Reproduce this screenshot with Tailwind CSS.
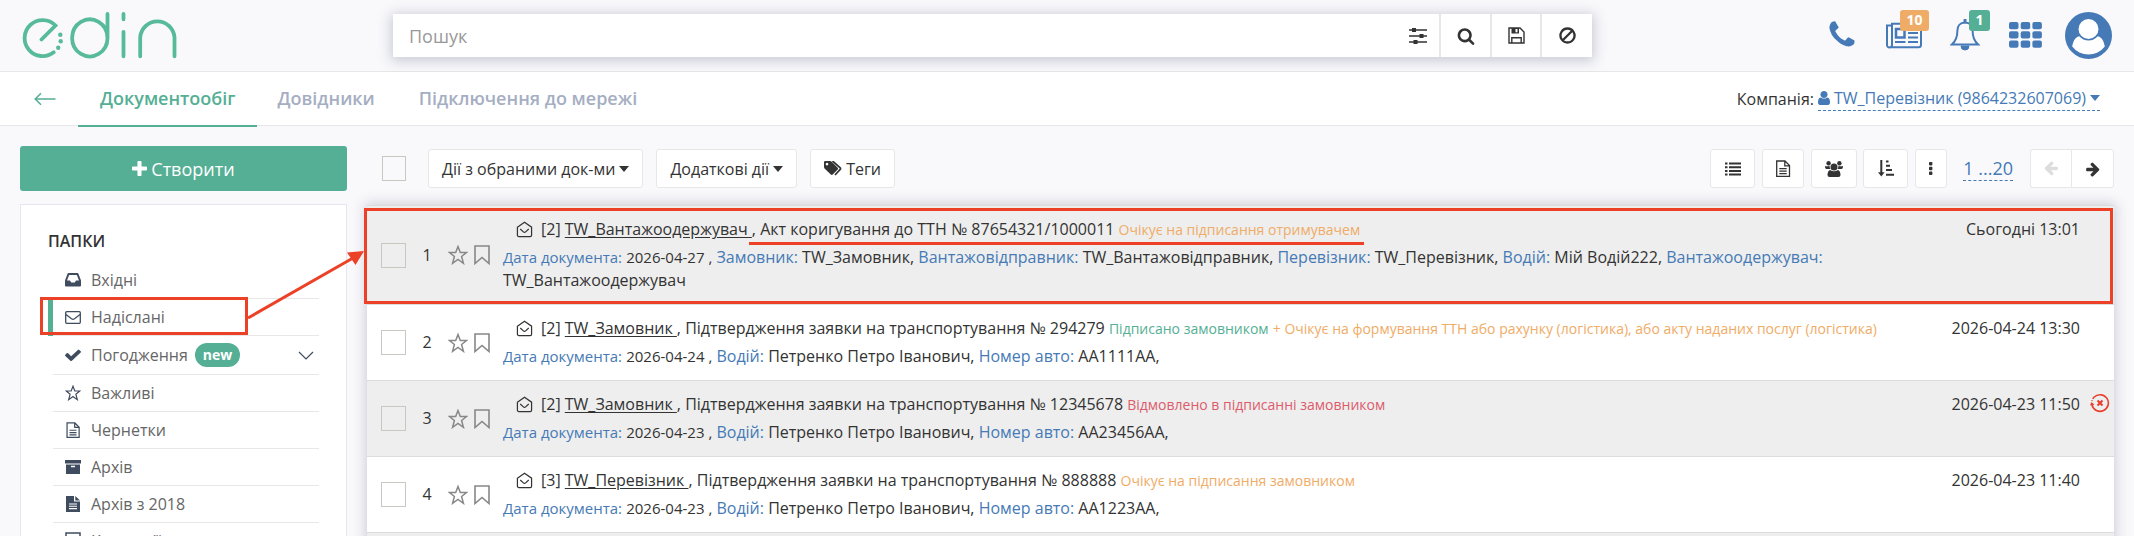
<!DOCTYPE html>
<html lang="uk">
<head>
<meta charset="utf-8">
<meta name="viewport" content="width=device-width, initial-scale=1">
<title>EDIN — Документообіг</title>
<script src="https://cdn.jsdelivr.net/npm/@tailwindcss/browser@4"></script>
</head>
<body class="flex h-screen flex-col overflow-hidden bg-[#f9f9fc] font-['Open_Sans','Noto_Sans',sans-serif] text-base text-[#333]">

<svg class="hidden" aria-hidden="true">
  <symbol id="star" viewBox="0 0 20 20"><path d="M10 1.500l2.300 6h6.200l-4.900 4 1.800 6.800L10 14.400l-5.400 3.900 1.800-6.800-4.900-4h6.200z" fill="none" stroke="currentColor" stroke-width="1.500"/></symbol>
  <symbol id="mark" viewBox="0 0 16 20"><path d="M1 1h14v17.500l-7-6-7 6z" fill="none" stroke="currentColor" stroke-width="1.600"/></symbol>
  <symbol id="open" viewBox="0 0 18 18"><path d="M1.500 6.500L9 1.200l7.500 5.300V15a1.500 1.500 0 0 1-1.500 1.500H3A1.500 1.500 0 0 1 1.500 15zM4.500 8.500l3.300 3a1.800 1.800 0 0 0 2.400 0l3.300-3" fill="none" stroke="currentColor" stroke-width="1.300"/></symbol>
  <symbol id="file" viewBox="0 0 16 18"><path d="M1.700 1h8.300l4.500 4.500V16.300H1.700zM9.800 1v4.800h4.700" fill="none" stroke="currentColor" stroke-width="1.300"/><path d="M4.300 8.700h7.400M4.300 11.200h7.400M4.300 13.700h7.400" stroke="currentColor" stroke-width="1.200"/></symbol>
  <symbol id="caret" viewBox="0 0 10 6"><path d="M0 0h10L5 6z" fill="currentColor"/></symbol>
  <symbol id="arrow" viewBox="0 0 1792 1792"><path fill="currentColor" d="M1600 960q0 54-37 91l-651 651q-39 37-91 37-51 0-90-37l-75-75q-38-38-38-91t38-91l293-293h-704q-52 0-84.500-37.500t-32.500-90.500v-128q0-53 32.500-90.500t84.500-37.500h704l-293-294q-38-36-38-90t38-90l75-75q38-38 90-38 53 0 91 38l651 651q37 35 37 90z"/></symbol>
</svg>

<header class="flex h-[72px] shrink-0 items-start border-b border-[#e7e7e7]">
  <a href="#" aria-label="edin" class="mt-[10px] ml-5 w-[373px] shrink-0">
    <svg class="h-[50px] w-[160px]" viewBox="20 10 160 50" fill="none" stroke="#57bb99" stroke-width="3.800" stroke-linecap="round">
      <path d="M41.500 39.500L55.500 25.500A18 18 0 1 0 53.700 52.300M107.500 14V38M107.500 38A17.700 18.500 0 1 1 107.500 37.900M123.500 13.800v5.500M123.500 31.800v24.500M140.200 56.300V37.500A17.200 17.500 0 0 1 174.500 37.500V56.300"/>
      <g fill="#57bb99" stroke="none"><circle cx="60.300" cy="34.800" r="2.200"/><circle cx="60.700" cy="41.300" r="2.200"/><circle cx="58.200" cy="47.800" r="2.200"/></g>
    </svg>
  </a>
  <form class="mt-[14px] flex h-[43px] flex-1 divide-x-2 divide-[#e7e7e7] bg-white shadow-[0_2px_12px_2px_rgba(60,65,95,0.25)]">
    <div class="flex flex-1 items-center">
      <input type="search" aria-label="Пошук" placeholder="Пошук" class="h-full min-w-0 flex-1 px-4 text-lg outline-none placeholder:text-[#999]">
      <button type="button" aria-label="Фільтр" class="mr-3"><svg class="size-[18px]" viewBox="0 0 18 18"><path d="M0 3h18M0 9h18M0 15h18" stroke="#333" stroke-width="1.400"/><path d="M3 1h4v4H3zM10.500 7h4v4h-4zM4.500 13h4v4h-4z" fill="#333"/></svg></button>
    </div>
    <button type="button" aria-label="Знайти" class="flex w-[51px] items-center justify-center"><svg class="size-[18px]" viewBox="0 0 1792 1792" fill="#333"><path d="M1216 832q0-185-131.500-316.500t-316.500-131.500-316.500 131.500-131.500 316.500 131.500 316.500 316.500 131.500 316.500-131.500 131.500-316.500zm512 832q0 52-38 90t-90 38q-54 0-90-38l-343-342q-179 124-399 124-143 0-273.500-55.500t-225-150-150-225-55.500-273.500 55.500-273.500 150-225 225-150 273.500-55.500 273.500 55.500 225 150 150 225 55.500 273.500q0 220-124 399l343 343q37 37 37 90z"/></svg></button>
    <button type="button" aria-label="Зберегти" class="flex w-[50px] items-center justify-center"><svg class="size-[17px]" viewBox="0 0 17 17"><path d="M1 1h11l4 4v11H1zM3.800 16v-5.300h9.400V16" fill="none" stroke="#333" stroke-width="1.400"/><path d="M3.500 1h7.500v5.500H3.500z" fill="#333"/><path d="M7.500 2h2v3.300h-2z" fill="#fff"/></svg></button>
    <button type="button" aria-label="Скинути" class="flex w-[50px] items-center justify-center"><svg class="size-[17px]" viewBox="0 0 17 17"><path d="M8.500 1.500a7 7 0 1 0 .01 0zM3.500 13.500l10-10" fill="none" stroke="#333" stroke-width="2.300"/></svg></button>
  </form>
  <div class="mr-[22px] ml-[234px] flex h-[70px] items-center text-[#457ab6]">
    <a href="#" aria-label="Телефон" class="mr-[27px]"><svg class="size-[32px]" viewBox="0 0 1792 1792" fill="currentColor"><path d="M1600 1240q0 27-10 70.500t-21 68.500q-21 50-122 106-94 51-186 51-27 0-53-3.500t-57.500-12.500-47-14.500-55.500-20.500-49-18q-98-35-175-83-127-79-264-216t-216-264q-48-77-83-175-3-9-18-49t-20.500-55.500-14.500-47-12.500-57.500-3.500-53q0-92 51-186 56-101 106-122 25-11 68.500-21t70.500-10q14 0 21 3 18 6 53 76 11 19 30 54t35 63.500 31 53.500q3 4 17.500 25t21.500 35.500 7 28.500q0 20-28.500 50t-62 55-62 53-28.500 46q0 9 5 22.500t8.500 20.500 14 24 11.500 19q76 137 174 235t235 174q2 1 19 11.500t24 14 20.500 8.500 22.500 5q18 0 46-28.500t53-62 55-62 50-28.500q14 0 28.500 7t35.500 21.500 25 17.500q25 15 53.500 31t63.500 35 54 30q70 35 76 53 3 7 3 21z"/></svg></a>
    <a href="#" aria-label="Новини" class="relative mr-[27px]"><svg class="h-[27px] w-[38px]" viewBox="0 0 38 27" fill="none" stroke="currentColor" stroke-width="2"><path d="M6.500 3.500H2v19.500a2.500 2.500 0 0 0 5 0V1.800h29v21a2.500 2.500 0 0 1-2.500 2.500H4.500"/><path d="M11 7h8.500v8.500H11z" stroke-width="2.500"/><path d="M23 6.500h10M23 11h10M23 15.500h10M10 20h10.500M23 20h10"/></svg><span class="absolute -top-[12px] left-[15px] flex h-[21px] w-[29px] items-center justify-center rounded-[3px] bg-[#efac67] text-sm font-bold text-white">10</span></a>
    <a href="#" aria-label="Сповіщення" class="relative mr-[29px]"><svg class="h-[33px] w-[30px]" viewBox="0 0 30 33" fill="none" stroke="currentColor" stroke-width="2"><path d="M15 3.500c-5 0-7.600 3.500-7.600 8 0 7-1.900 11-5.600 14h26.400c-3.700-3-5.600-7-5.600-14 0-4.500-2.600-8-7.600-8z"/><path d="M15 1v2" stroke-width="3" stroke-linecap="round"/><path d="M11 27h8a4 4 0 0 1-8 0z" fill="currentColor" stroke-width="1"/></svg><span class="absolute -top-[9px] left-[19px] flex h-[21px] w-[21px] items-center justify-center rounded-[3px] bg-[#54af94] text-sm font-bold text-white">1</span></a>
    <a href="#" aria-label="Сервіси" class="mr-[23px]"><svg class="h-[26px] w-[33px]" viewBox="0 0 33 26" fill="currentColor"><rect width="9.500" height="7.300" rx="2"/><rect x="11.700" width="9.500" height="7.300" rx="2"/><rect x="23.400" width="9.500" height="7.300" rx="2"/><rect y="9.200" width="9.500" height="7.300" rx="2"/><rect x="11.700" y="9.200" width="9.500" height="7.300" rx="2"/><rect x="23.400" y="9.200" width="9.500" height="7.300" rx="2"/><rect y="18.400" width="9.500" height="7.300" rx="2"/><rect x="11.700" y="18.400" width="9.500" height="7.300" rx="2"/><rect x="23.400" y="18.400" width="9.500" height="7.300" rx="2"/></svg></a>
    <a href="#" aria-label="Профіль"><svg class="size-[47px]" viewBox="0 0 47 47"><circle cx="23.500" cy="23.500" r="23.500" fill="#457ab6"/><circle cx="23.500" cy="17" r="10" fill="#fff"/><path d="M14.200 24.300Q18 28.500 23.500 28.500T32.800 24.300C37.300 25.500 39 30 39.800 34.500A20.500 20.500 0 0 1 7.200 34.500C8 30 9.700 25.500 14.200 24.300z" fill="#fff"/></svg></a>
  </div>
</header>

<nav class="flex h-[54px] shrink-0 items-center border-b border-[#e7e7e7] bg-white pr-[34px] text-lg font-semibold text-[#a5aec2]">
  <a href="#" aria-label="Назад" class="mr-[22px] ml-[34px] text-[#54af94]"><svg class="h-[14px] w-[22px]" viewBox="0 0 22 14" fill="none" stroke="currentColor" stroke-width="1.500"><path d="M21.500 7H1.500M7 1.200L1.200 7 7 12.800"/></svg></a>
  <a href="#" class="relative flex h-[54px] items-center px-[22px] pb-0.5 text-[#54af94] after:absolute after:inset-x-0 after:-bottom-px after:h-[2px] after:bg-[#54af94]">Документообіг</a>
  <a href="#" class="ml-5 pb-0.5">Довідники</a>
  <a href="#" class="ml-11 pb-0.5">Підключення до мережі</a>
  <div class="ml-auto flex items-center gap-1 text-base font-normal text-[#333]">
    <span>Компанія:</span>
    <button type="button" class="flex items-center border-b border-dashed border-[#457ab6] text-[#457ab6]"><svg class="mr-1 h-[14px] w-[12px]" viewBox="256 128 1280 1536" preserveAspectRatio="none" fill="currentColor"><path d="M1536 1399q0 109-62.500 187t-150.500 78h-854q-88 0-150.500-78t-62.500-187q0-85 8.500-160.500t31.500-152 58.500-131 94-89 134.500-34.500q131 128 313 128t313-128q76 0 134.500 34.500t94 89 58.500 131 31.500 152 8.500 160.500zm-256-887q0 159-112.500 271.500t-271.500 112.500-271.500-112.500-112.500-271.500 112.500-271.500 271.500-112.500 271.500 112.500 112.500 271.500z"/></svg>TW_Перевізник (9864232607069)<svg class="ml-1 h-[6px] w-[10px]"><use href="#caret"/></svg></button>
  </div>
</nav>

<main class="relative flex min-h-0 flex-1 gap-5 px-5 pt-5">
  <aside class="w-[327px] shrink-0">
    <button type="button" class="flex h-[45px] w-full items-center justify-center gap-1 rounded-[3px] bg-[#54af94] text-lg text-white"><svg class="size-[15px]" viewBox="192 128 1408 1408" fill="currentColor"><path d="M1600 736v192q0 40-28 68t-68 28h-416v416q0 40-28 68t-68 28h-192q-40 0-68-28t-28-68v-416h-416q-40 0-68-28t-28-68v-192q0-40 28-68t68-28h416v-416q0-40 28-68t68-28h192q40 0 68 28t28 68v416h416q40 0 68 28t28 68z"/></svg>Створити</button>
    <div class="mt-[13px] border border-[#e5e6f2] bg-white pt-6 pr-[27px] pb-6 pl-[27px] text-[#666]">
      <h2 class="font-semibold text-[#333]">ПАПКИ</h2>
      <ul class="mt-[9px] pl-[5px] text-[#666] [&_svg]:text-[#3f4c60] [&>li>a]:flex [&>li>a]:h-[37px] [&>li>a]:items-center [&>li>a]:border-b [&>li>a]:border-[#e7e7e7] [&>li>a]:pl-3">
        <li><a href="#"><svg class="mr-[10px] h-[14px] w-[16px]" viewBox="0 0 16 14"><path d="M3.500 1h9L15 7.500V12.500H1V7.500z" fill="none" stroke="currentColor" stroke-width="2" stroke-linejoin="round"/><path d="M1 7.500h4l1.200 2h3.600l1.200-2h4V13H1z" fill="currentColor"/></svg>Вхідні</a></li>
        <li class="relative"><a href="#"><svg class="mr-[10px] h-[13px] w-[16px]" viewBox="0 0 16 13" fill="none" stroke="currentColor" stroke-width="1.300"><rect x=".7" y=".7" width="14.600" height="11.600" rx="1"/><path d="M1 3.500l5.500 4.300q1.500 1 3 0L15 3.500"/></svg>Надіслані</a>
          <span class="absolute inset-y-0 -left-[5px] w-[5px] bg-[#54af94]"></span>
          <span class="absolute -top-[2px] -left-[13px] h-[38px] w-[208px] border-[3px] border-[#ec4127]"></span></li>
        <li><a href="#" class="!h-[39px]"><svg class="mr-[10px] h-[12px] w-[16px]" viewBox="120 270 1552 1252" preserveAspectRatio="none" fill="currentColor"><path d="M1671 566q0 40-28 68l-724 724-136 136q-28 28-68 28t-68-28l-136-136-362-362q-28-28-28-68t28-68l136-136q28-28 68-28t68 28l294 295 656-657q28-28 68-28t68 28l136 136q28 28 28 68z"/></svg>Погодження<span class="ml-[7px] flex h-6 items-center rounded-full bg-[#54af94] px-2 text-sm font-bold text-white">new</span><svg class="mr-[5px] ml-auto h-[9px] w-[16px]" viewBox="0 0 16 9" fill="none" stroke="currentColor" stroke-width="1.200"><path d="M1 1l7 7 7-7"/></svg></a></li>
        <li><a href="#"><svg class="mr-[10px] size-[16px]"><use href="#star"/></svg>Важливі</a></li>
        <li><a href="#"><svg class="mr-[10px] h-[17px] w-[16px]"><use href="#file"/></svg>Чернетки</a></li>
        <li><a href="#"><svg class="mr-[10px] h-[14px] w-[16px]" viewBox="0 0 16 14" fill="currentColor"><path d="M0 0h16v3.500H0zM1 4.500h14V14H1zM6 5.800v1.400h4V5.800z" fill-rule="evenodd"/></svg>Архів</a></li>
        <li><a href="#"><svg class="mr-[10px] size-[16px]" viewBox="0 0 16 16"><path d="M1 0h8v5.500h6V16H1zM10.300 0L15 4.500h-4.700z" fill="currentColor"/><path d="M4 8h8M4 10.300h8M4 12.600h8" stroke="#fff" stroke-width="1.100"/></svg>Архів з 2018</a></li>
        <li><a href="#"><svg class="mr-[10px] h-[18px] w-[16px]" viewBox="0 0 16 18"><path d="M1 1h14v16H1z" fill="none" stroke="currentColor" stroke-width="1.500"/></svg>Категорії</a></li>
      </ul>
    </div>
  </aside>

  <section class="min-w-0 flex-1">
    <div class="mt-[3px] flex h-[39px] items-stretch pl-[15px] text-[#333] [&_button]:flex [&_button]:items-center [&_button]:justify-center [&_button]:rounded-[3px] [&_button]:border [&_button]:border-[#e7e7e7] [&_button]:bg-white">
      <input type="checkbox" aria-label="Обрати всі" class="mr-[22px] h-[25px] w-[24px] appearance-none self-center border border-[#c9c8c0]">
      <button type="button" class="mr-[13px] gap-1 px-[13px]">Дії з обраними док-ми<svg class="h-[6px] w-[10px]"><use href="#caret"/></svg></button>
      <button type="button" class="mr-[13px] gap-1 px-[13px]">Додаткові дії<svg class="h-[6px] w-[10px]"><use href="#caret"/></svg></button>
      <button type="button" class="gap-1 px-[13px]"><svg class="h-[15px] w-[18px]" viewBox="0 0 18 15"><path d="M0 1.300A1.300 1.300 0 0 1 1.300 0H6q1 0 1.700.7l6 6q.9 1 0 1.900l-5 5q-1 .9-1.900 0L.8 7.700Q0 7 0 6zM3 1.800a1.300 1.300 0 1 0 .01 0z" fill="currentColor" fill-rule="evenodd"/><path d="M8.500 0l7.500 6.700q1 1 0 2L11 14" fill="none" stroke="currentColor" stroke-width="1.700"/></svg>Теги</button>
      <div class="ml-auto flex">
        <button type="button" aria-label="Список" class="mr-[7px] w-[45px]"><svg class="h-[14px] w-[16px]" viewBox="0 0 16 14" stroke="currentColor" stroke-width="2"><path d="M0 1.500h2.500M4 1.500h12M0 5.200h2.500M4 5.200h12M0 8.900h2.500M4 8.900h12M0 12.600h2.500M4 12.600h12"/></svg></button>
        <button type="button" aria-label="Документ" class="mr-[7px] w-[42px]"><svg class="h-[18px] w-[16px]"><use href="#file"/></svg></button>
        <button type="button" aria-label="Контрагенти" class="mr-[6px] w-[46px]"><svg class="h-[16px] w-[18px]" viewBox="0 0 18 16" fill="currentColor"><circle cx="9" cy="6" r="3.500"/><circle cx="3.600" cy="2.300" r="2.200"/><circle cx="14.400" cy="2.300" r="2.200"/><path d="M5 9q4 2.500 8 0 2.500 1 2.500 5 0 2-2 2h-9q-2 0-2-2 0-4 2.500-5zM0 5q2 .8 4.500-.3 0 2 1 3.300H1.500Q0 8 0 5zM18 5q-2 .8-4.500-.3 0 2-1 3.300h4Q18 8 18 5z"/></svg></button>
        <button type="button" aria-label="Сортування" class="mr-[7px] w-[45px]"><svg class="h-[17px] w-[16px]" viewBox="0 0 16 17"><path d="M3.300 0v13M8 1.500h2.500M8 5.800h4M8 10.100h6M8 14.800h8" stroke="currentColor" stroke-width="2"/><path d="M0 12.300h6.600L3.300 16.500z" fill="currentColor"/></svg></button>
        <button type="button" aria-label="Ще" class="mr-[16px] w-[32px]"><svg class="h-[13px] w-[4px]" viewBox="0 0 4 13" fill="currentColor"><rect width="3.400" height="3.400" rx=".8"/><rect y="4.800" width="3.400" height="3.400" rx=".8"/><rect y="9.600" width="3.400" height="3.400" rx=".8"/></svg></button>
        <a href="#" class="mr-[17px] self-center border-b border-dashed border-[#457ab6] text-lg leading-6 text-[#457ab6]">1 ...20</a>
        <button type="button" aria-label="Попередня" disabled class="w-[41px] !rounded-r-none !border-r-0 text-[#ddd]"><svg class="size-4 rotate-180"><use href="#arrow"/></svg></button>
        <button type="button" aria-label="Наступна" class="w-[43px] !rounded-l-none"><svg class="size-4"><use href="#arrow"/></svg></button>
      </div>
    </div>

    <div class="relative mt-[17px] border-t border-[#dcdcdc] shadow-[0_0_12px_2px_rgba(60,65,95,0.22)]">
      <table class="w-full table-fixed bg-white leading-[23px] [&_td]:p-0 [&_td:nth-child(5)]:pt-3 [&_td:nth-child(5)]:text-right [&_td:nth-child(5)]:align-top [&_td:nth-child(4)]:py-3 [&_tr]:border-b [&_tr]:border-[#dcdcdc]">
        <colgroup><col class="w-[44px]"><col class="w-[32px]"><col class="w-[60px]"><col><col class="w-[202px]"><col class="w-[34px]"></colgroup>
        <tbody>
          <tr class="bg-[#eee]">
            <td><input type="checkbox" aria-label="Обрати 1" class="ml-[14px] block h-[25px] w-[25px] appearance-none border border-[#c9c8c0]"></td>
            <td class="text-center">1</td>
            <td><div class="flex gap-[6px] pl-[5px] text-[#888]"><svg class="size-[20px]"><use href="#star"/></svg><svg class="h-[20px] w-[16px]"><use href="#mark"/></svg></div></td>
            <td><p class="mb-[5px] pl-[13px]"><svg class="mr-2 inline size-[17px] align-[-3px]"><use href="#open"/></svg>[2] <a href="#" class="underline underline-offset-2">TW_Вантажоодержувач </a><span class="relative">, Акт коригування до ТТН № 87654321/1000011 <span class="text-sm text-[#efac67]">Очікує на підписання отримувачем</span><span class="absolute -right-[4px] -bottom-[5px] -left-[3px] h-[3px] bg-[#ec4127]"></span></span></p>
              <p><span class="text-[15px] text-[#457ab6]">Дата документа:</span> <span class="text-[15px]">2026-04-27 ,</span> <span class="text-[#457ab6]">Замовник:</span> TW_Замовник, <span class="text-[#457ab6]">Вантажовідправник:</span> TW_Вантажовідправник, <span class="text-[#457ab6]">Перевізник:</span> TW_Перевізник, <span class="text-[#457ab6]">Водій:</span> Мій Водій222, <span class="text-[#457ab6]">Вантажоодержувач:</span> TW_Вантажоодержувач</p></td>
            <td>Сьогодні 13:01</td><td></td>
          </tr>
          <tr>
            <td><input type="checkbox" aria-label="Обрати 2" class="ml-[14px] block h-[25px] w-[25px] appearance-none border border-[#c9c8c0]"></td>
            <td class="text-center">2</td>
            <td><div class="flex gap-[6px] pl-[5px] text-[#888]"><svg class="size-[20px]"><use href="#star"/></svg><svg class="h-[20px] w-[16px]"><use href="#mark"/></svg></div></td>
            <td><p class="mb-[5px] pl-[13px]"><svg class="mr-2 inline size-[17px] align-[-3px]"><use href="#open"/></svg>[2] <a href="#" class="underline underline-offset-2">TW_Замовник </a>, Підтвердження заявки на транспортування № 294279 <span class="text-sm text-[#54af94]">Підписано замовником</span> <span class="text-sm text-[#efac67]">+ Очікує на формування ТТН або рахунку (логістика), або акту наданих послуг (логістика)</span></p>
              <p><span class="text-[15px] text-[#457ab6]">Дата документа:</span> <span class="text-[15px]">2026-04-24 ,</span> <span class="text-[#457ab6]">Водій:</span> Петренко Петро Іванович, <span class="text-[#457ab6]">Номер авто:</span> АА1111АА,</p></td>
            <td>2026-04-24 13:30</td><td></td>
          </tr>
          <tr class="bg-[#eee]">
            <td><input type="checkbox" aria-label="Обрати 3" class="ml-[14px] block h-[25px] w-[25px] appearance-none border border-[#c9c8c0]"></td>
            <td class="text-center">3</td>
            <td><div class="flex gap-[6px] pl-[5px] text-[#888]"><svg class="size-[20px]"><use href="#star"/></svg><svg class="h-[20px] w-[16px]"><use href="#mark"/></svg></div></td>
            <td><p class="mb-[5px] pl-[13px]"><svg class="mr-2 inline size-[17px] align-[-3px]"><use href="#open"/></svg>[2] <a href="#" class="underline underline-offset-2">TW_Замовник </a>, Підтвердження заявки на транспортування № 12345678 <span class="text-sm text-[#dc5b6b]">Відмовлено в підписанні замовником</span></p>
              <p><span class="text-[15px] text-[#457ab6]">Дата документа:</span> <span class="text-[15px]">2026-04-23 ,</span> <span class="text-[#457ab6]">Водій:</span> Петренко Петро Іванович, <span class="text-[#457ab6]">Номер авто:</span> АА23456АА,</p></td>
            <td>2026-04-23 11:50</td>
            <td class="align-top"><svg class="mt-[12px] ml-[10px] size-[20px]" viewBox="0 0 20 20" fill="none" stroke="#e93c2b"><path d="M2 12A8.300 8.300 0 1 0 4 4.300" stroke-width="1.600"/><path d="M4 4.300A8.300 8.300 0 0 0 2 8" stroke-width="1.600" stroke-dasharray="2 1.500"/><path d="M7.500 7.500l5 5M12.500 7.500l-5 5" stroke-width="2"/><path d="M0 12.500L1.500 9l3 2.800z" fill="#e93c2b" stroke="none"/></svg></td>
          </tr>
          <tr>
            <td><input type="checkbox" aria-label="Обрати 4" class="ml-[14px] block h-[25px] w-[25px] appearance-none border border-[#c9c8c0]"></td>
            <td class="text-center">4</td>
            <td><div class="flex gap-[6px] pl-[5px] text-[#888]"><svg class="size-[20px]"><use href="#star"/></svg><svg class="h-[20px] w-[16px]"><use href="#mark"/></svg></div></td>
            <td><p class="mb-[5px] pl-[13px]"><svg class="mr-2 inline size-[17px] align-[-3px]"><use href="#open"/></svg>[3] <a href="#" class="underline underline-offset-2">TW_Перевізник </a>, Підтвердження заявки на транспортування № 888888 <span class="text-sm text-[#efac67]">Очікує на підписання замовником</span></p>
              <p><span class="text-[15px] text-[#457ab6]">Дата документа:</span> <span class="text-[15px]">2026-04-23 ,</span> <span class="text-[#457ab6]">Водій:</span> Петренко Петро Іванович, <span class="text-[#457ab6]">Номер авто:</span> АА1223АА,</p></td>
            <td>2026-04-23 11:40</td><td></td>
          </tr>
          <tr class="h-[76px] bg-[#eee]"><td colspan="6"></td></tr>
        </tbody>
      </table>
      <div class="pointer-events-none absolute top-[2px] right-[1px] -left-[3px] h-[96px] border-[3px] border-[#ec4127]"></div>
    </div>
  </section>

  <svg class="pointer-events-none absolute top-[120px] left-[246px] h-[80px] w-[120px]" viewBox="246 246 120 80"><path d="M248 318L353 258" stroke="#ec4127" stroke-width="3"/><path d="M364 251L347 252.500L355.500 265z" fill="#ec4127"/></svg>
</main>
</body>
</html>
